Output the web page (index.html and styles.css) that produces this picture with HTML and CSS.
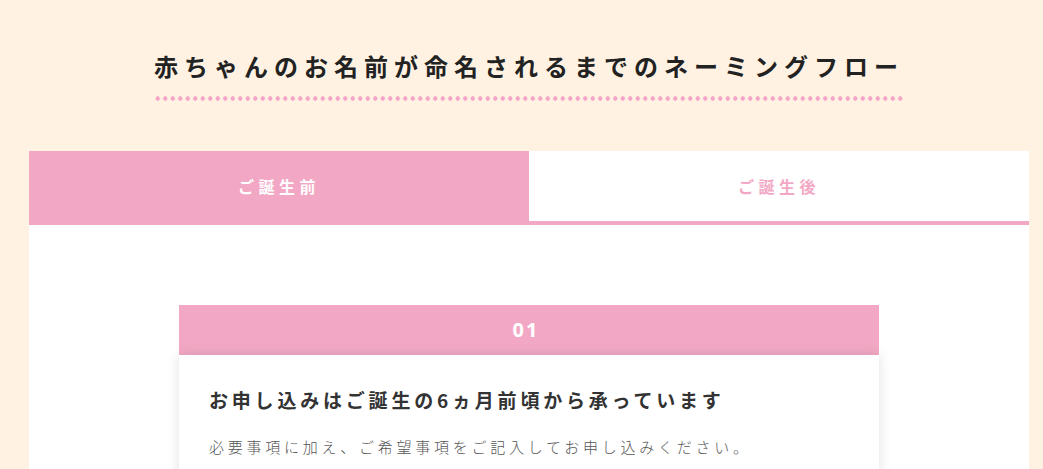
FILE: index.html
```html
<!DOCTYPE html>
<html lang="ja">
<head>
<meta charset="utf-8">
<title>ネーミングフロー</title>
<link rel="stylesheet" href="styles.css">
</head>
<body>
<div class="page">
  <div class="title-wrap">
    <h2 class="title">赤ちゃんのお名前が命名されるまでのネーミングフロー</h2>
  </div>
  <div class="tabs">
    <div class="tab tab-active">ご誕生前</div>
    <div class="tab">ご誕生後</div>
  </div>
  <div class="panel">
    <div class="card">
      <div class="card-num">01</div>
      <div class="card-body">
        <h3 class="card-title">お申し込みはご誕生の6ヵ月前頃から承っています</h3>
        <p class="card-text">必要事項に加え、ご希望事項をご記入してお申し込みください。</p>
      </div>
    </div>
  </div>
</div>
</body>
</html>
```

FILE: styles.css
```css
html, body {
  margin: 0;
  padding: 0;
  background: #fff2e2;
  font-family: "Noto Sans CJK JP", "Noto Sans", sans-serif;
  overflow: hidden;
}

.page {
  width: 1000px;
  margin-left: 29px;
  padding-top: 48px;
}

.title-wrap {
  display: flex;
  justify-content: center;
  margin-bottom: 50px;
}

.title {
  margin: 0;
  font-size: 24px;
  line-height: 36px;
  font-weight: 700;
  letter-spacing: 0.25em;
  color: #222;
  padding-bottom: 17px;
  background-image: radial-gradient(circle, #f5a6c8 2px, rgba(245,166,200,0) 2.5px);
  background-size: 7.5px 5px;
  background-repeat: repeat-x;
  background-position: left bottom;
}

.tabs {
  display: flex;
}

.tab {
  flex: 1;
  height: 70px;
  line-height: 70px;
  text-align: center;
  font-size: 16px;
  font-weight: 700;
  letter-spacing: 0.28em;
  background: #fff;
  color: #f2a8c4;
  border-bottom: 4px solid #f2a8c4;
}

.tab-active {
  background: #f2a8c4;
  color: #fff;
}

.panel {
  background: #fff;
  padding-top: 80px;
  height: 300px;
}

.card {
  width: 700px;
  margin: 0 auto;
}

.card-num {
  height: 50px;
  line-height: 50px;
  background: #f2a8c4;
  color: #fff;
  text-align: center;
  font-family: "Noto Sans", "Noto Sans CJK JP", sans-serif;
  font-size: 20px;
  font-weight: 700;
  letter-spacing: 0.1em;
  padding-right: 6px;
}

.card-body {
  background: #fff;
  box-shadow: 0 0 12px rgba(0, 0, 0, 0.12);
  padding: 30px 30px 40px;
}

.card-title {
  margin: 0;
  font-size: 19px;
  line-height: 30px;
  font-weight: 700;
  letter-spacing: 0.2em;
  color: #333;
}

.card-text {
  margin: 18px 0 0;
  font-size: 15px;
  line-height: 27px;
  font-weight: 300;
  letter-spacing: 0.25em;
  color: #555;
}
```
